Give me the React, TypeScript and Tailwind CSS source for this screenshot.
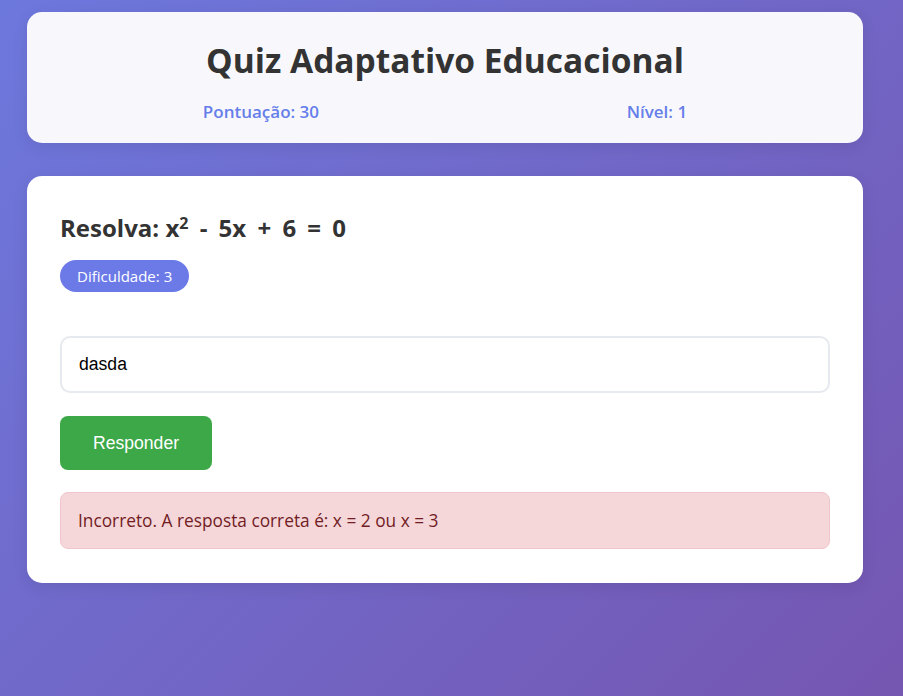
export default function App() {
  const score = 30;
  const level = 1;
  const difficulty = 3;

  return (
    <div className="min-h-[696px] w-full bg-[linear-gradient(135deg,#6d78dd_0%,#7556b1_100%)] pt-[12px] font-['Open_Sans',sans-serif]">
      <div className="ml-[27px] w-[836px]">
        {/* Header. */}
        <div className="h-[131px] rounded-[15px] bg-[#f8f8fc] px-[22px] pt-[26px] shadow-[0_4px_16px_rgba(0,0,0,0.08)]">
          <h1 className="text-center text-[33.5px] leading-[44px] font-bold text-[#333]">
            Quiz Adaptativo Educacional
          </h1>
          <div className="mt-[18px] flex justify-around text-[17px] leading-[24px] font-semibold text-[#667eea]">
            <span>Pontuação: {score}</span>
            <span>Nível: {level}</span>
          </div>
        </div>

        {/* Question card. */}
        <div className="mt-[33px] rounded-[15px] bg-white px-[33px] pt-[34px] pb-[34px] shadow-[0_4px_16px_rgba(0,0,0,0.08)]">
          <h2 className="text-[24px] leading-[36px] font-bold text-[#333]">
            Resolva:{" "}
            <span className="[word-spacing:5px]">
              x<sup className="text-[16px]">2</sup> - 5x + 6 = 0
            </span>
          </h2>
          <span className="mt-[14px] inline-flex h-[32px] items-center rounded-full bg-[#6c7ae8] px-[17px] text-[15px] text-white">
            Dificuldade: {difficulty}
          </span>

          <input
            type="text"
            defaultValue="dasda"
            className="mt-[44px] block h-[57px] w-full rounded-[10px] border-2 border-[#e6e9ee] px-[17px] font-['Liberation_Sans',Arial,sans-serif] text-[17.6px] text-black outline-none"
          />

          <button className="mt-[23px] block h-[54px] w-[152px] rounded-[8px] bg-[#3ca848] font-['Liberation_Sans',Arial,sans-serif] text-[17.6px] text-white">
            Responder
          </button>

          <div className="mt-[22px] flex h-[57px] items-center rounded-[8px] border border-[#f1c6cb] bg-[#f5d7da] px-[17px] text-[17.3px] text-[#721c24]">
            Incorreto. A resposta correta é: x = 2 ou x = 3
          </div>
        </div>
      </div>
    </div>
  );
}
